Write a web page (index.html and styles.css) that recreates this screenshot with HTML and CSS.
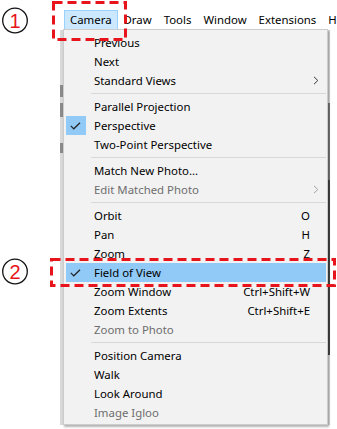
FILE: index.html
```html
<!DOCTYPE html>
<html>
<head>
<meta charset="utf-8">
<link rel="stylesheet" href="styles.css">
</head>
<body>
<div class="menubar">
  <span class="mb-item active">Camera</span>
  <span class="mb-item">Draw</span>
  <span class="mb-item">Tools</span>
  <span class="mb-item">Window</span>
  <span class="mb-item">Extensions</span>
  <span class="mb-item">Help</span>
</div>

<div class="bg-left"></div>
<div class="bg-right"></div>

<div class="menu">
  <div class="item"><span class="check"></span><span class="label">Previous</span></div>
  <div class="item"><span class="check"></span><span class="label">Next</span></div>
  <div class="item"><span class="check"></span><span class="label">Standard Views</span><span class="sub"><svg width="6" height="9" viewBox="0 0 6 9"><path d="M1 0.8 L4.8 4.5 L1 8.2" fill="none" stroke="#333" stroke-width="1"/></svg></span></div>
  <div class="sep"></div>
  <div class="item"><span class="check"></span><span class="label">Parallel Projection</span></div>
  <div class="item"><span class="check on"><svg width="11" height="8" viewBox="0 0 11 8"><path d="M0.8 3.8 L3.8 6.8 L10 0.8" fill="none" stroke="#222" stroke-width="1.2"/></svg></span><span class="label">Perspective</span></div>
  <div class="item"><span class="check"></span><span class="label">Two-Point Perspective</span></div>
  <div class="sep"></div>
  <div class="item"><span class="check"></span><span class="label">Match New Photo...</span></div>
  <div class="item dis"><span class="check"></span><span class="label">Edit Matched Photo</span><span class="sub"><svg width="6" height="9" viewBox="0 0 6 9"><path d="M1 0.8 L4.8 4.5 L1 8.2" fill="none" stroke="#a0a0a0" stroke-width="1"/></svg></span></div>
  <div class="sep"></div>
  <div class="item"><span class="check"></span><span class="label">Orbit</span><span class="key">O</span></div>
  <div class="item"><span class="check"></span><span class="label">Pan</span><span class="key">H</span></div>
  <div class="item"><span class="check"></span><span class="label">Zoom</span><span class="key">Z</span></div>
  <div class="item hl"><span class="check on"><svg width="11" height="8" viewBox="0 0 11 8"><path d="M0.8 3.8 L3.8 6.8 L10 0.8" fill="none" stroke="#222" stroke-width="1.2"/></svg></span><span class="label">Field of View</span></div>
  <div class="item"><span class="check"></span><span class="label">Zoom Window</span><span class="key">Ctrl+Shift+W</span></div>
  <div class="item"><span class="check"></span><span class="label">Zoom Extents</span><span class="key">Ctrl+Shift+E</span></div>
  <div class="item dis"><span class="check"></span><span class="label">Zoom to Photo</span></div>
  <div class="sep"></div>
  <div class="item"><span class="check"></span><span class="label">Position Camera</span></div>
  <div class="item"><span class="check"></span><span class="label">Walk</span></div>
  <div class="item"><span class="check"></span><span class="label">Look Around</span></div>
  <div class="item dis"><span class="check"></span><span class="label">Image Igloo</span></div>
</div>

<svg class="annot" width="337" height="429" viewBox="0 0 337 429">
  <circle cx="15" cy="20.5" r="12.3" fill="#fff" stroke="#111" stroke-width="1.3"/>
  <text x="15" y="27.5" class="num">1</text>
  <rect x="53.5" y="2.5" width="72" height="37" class="dash"/>
  <circle cx="15" cy="271.5" r="12.3" fill="#fff" stroke="#111" stroke-width="1.3"/>
  <text x="15" y="278.5" class="num">2</text>
  <rect x="51.5" y="259.5" width="283" height="26" class="dash"/>
</svg>
</body>
</html>
```
FILE: styles.css
```css
* { box-sizing: border-box; }
html, body { margin: 0; padding: 0; }
body {
  width: 337px;
  height: 429px;
  overflow: hidden;
  background: #fff;
  font-family: "Noto Sans", sans-serif;
  font-size: 11.4px;
  color: #000;
  position: relative;
}

.menubar {
  display: flex;
  height: 20px;
  margin-top: 10px;
  padding-left: 64px;
  white-space: nowrap;
  overflow: hidden;
}
.mb-item {
  padding: 0 5px;
  line-height: 18px;
  border: 1px solid transparent;
}
.mb-item.active {
  background: #cce8ff;
  border-color: #99d1ff;
}

.bg-left {
  position: absolute;
  left: 60px;
  top: 30px;
  width: 3px;
  height: 395px;
  background: linear-gradient(#d9d9d9 0 55px, #8a8a8a 55px 67px, #d9d9d9 67px 73px, #8a8a8a 73px 87px, #d9d9d9 87px 113px, #8a8a8a 113px 123px, #d9d9d9 123px);
}
.bg-right {
  position: absolute;
  left: 328px;
  top: 30px;
  width: 2px;
  height: 395px;
  background: linear-gradient(#d4d4d4 0 73px, #777 73px 150px, #444 150px 325px, #d4d4d4 325px);
}

.menu {
  position: absolute;
  left: 63px;
  top: 29px;
  width: 265px;
  background: #f2f2f2;
  border: 1px solid #cccccc;
  padding: 3px 1px 2px 2px;
  box-shadow: 1px 2px 2px rgba(0, 0, 0, 0.3);
}
.item {
  display: flex;
  align-items: center;
  height: 19px;
  white-space: nowrap;
}
.item.hl { background: #91c9f7; }
.item.dis { color: #6d6d6d; }
.check {
  width: 20px;
  height: 19px;
  display: flex;
  align-items: center;
  justify-content: center;
}
.check svg { display: block; margin-left: -1px; }
.check.on { background: #91c9f7; }
.label {
  flex: 1;
  margin-left: 8px;
}
.key {
  padding-right: 16px;
  text-align: right;
}
.sub {
  width: 17px;
  display: flex;
  align-items: center;
}
.sub svg { display: block; margin-left: 4px; }
.sep {
  height: 7px;
  display: flex;
  align-items: center;
  padding-left: 25px;
}
.sep::before {
  content: "";
  flex: 1;
  height: 1px;
  background: #d7d7d7;
}

.annot {
  position: absolute;
  left: 0;
  top: 0;
  pointer-events: none;
}
.annot .num {
  font-family: "Liberation Sans", sans-serif;
  font-size: 20px;
  fill: #e8141b;
  text-anchor: middle;
}
.annot .dash {
  fill: none;
  stroke: #e8141b;
  stroke-width: 3;
  stroke-dasharray: 9 5;
}
```
